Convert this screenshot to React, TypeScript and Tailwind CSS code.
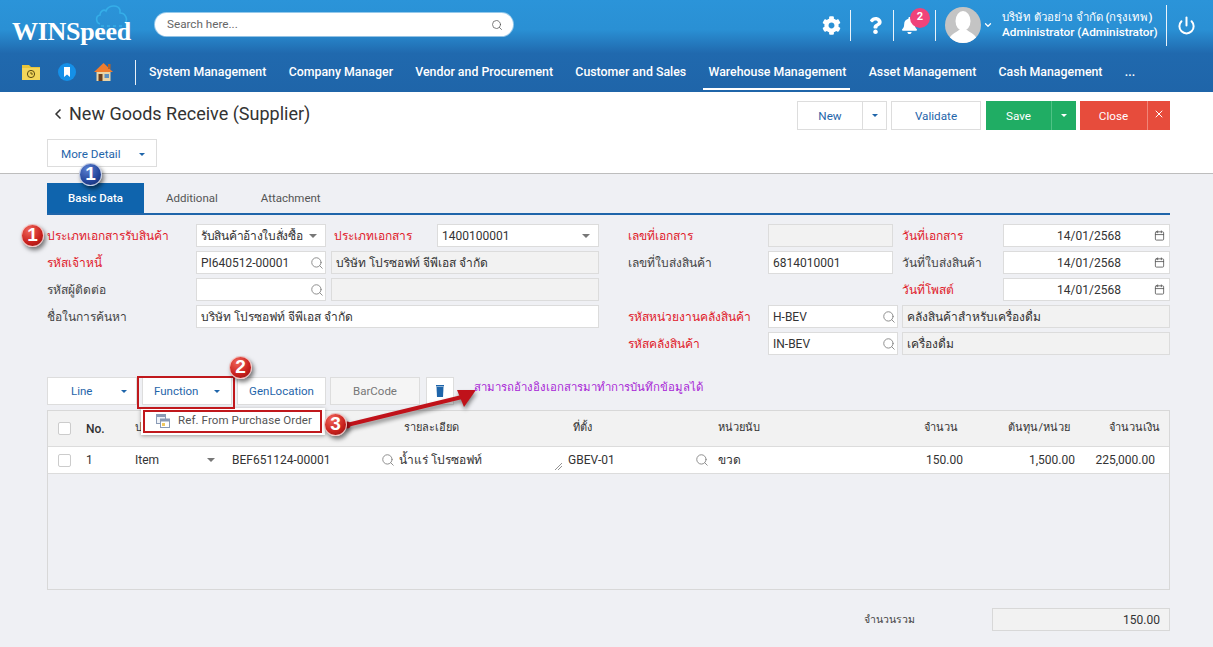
import React from "react";
import { Search, Calendar, Power, ChevronLeft, ChevronDown, X } from "lucide-react";
import { FaCog, FaQuestion, FaBell } from "react-icons/fa";

function Caret({ className = "border-t-[#1f65aa]" }: { className?: string }) {
  return <span className={`inline-block w-0 h-0 border-x-[3px] border-x-transparent border-t-[3px] ${className}`} />;
}

function GrayCaret() {
  return <span className="inline-block w-0 h-0 border-x-[4px] border-x-transparent border-t-[4px] border-t-[#777]" />;
}

function Label({ text, red, className = "" }: { text: string; red?: boolean; className?: string }) {
  return <div className={`text-xs shrink-0 ${red ? "text-[#e0202a]" : "text-[#444]"} ${className}`}>{text}</div>;
}

function Field({ value, className = "", search, ro, caret, date }: { value?: string; className?: string; search?: boolean; ro?: boolean; caret?: boolean; date?: boolean }) {
  return (
    <div className={`h-[23px] border border-[#dcdcdc] flex items-center px-1 text-xs text-[#333] ${ro ? "bg-[#f2f2f2]" : "bg-white"} ${className}`}>
      <span className={`flex-1 truncate ${date ? "text-center pl-[16px]" : ""}`}>{value}</span>
      {search && <Search size={14} strokeWidth={1.6} className="text-[#888] -mr-[3px] shrink-0" />}
      {caret && <span className="mr-1 flex shrink-0"><GrayCaret /></span>}
      {date && <Calendar size={11} strokeWidth={1.8} className="text-[#555] shrink-0" />}
    </div>
  );
}

function Row({ children }: { children: React.ReactNode }) {
  return <div className="flex items-center h-[23px]">{children}</div>;
}

function Nav({ text, active }: { text: string; active?: boolean }) {
  return (
    <div className="relative text-[12.35px] font-medium text-white whitespace-nowrap h-full flex items-center">
      {text}
      {active && <span className="absolute bottom-[2px] -left-[5px] -right-[4px] h-[2px] bg-white" />}
    </div>
  );
}

function Sep({ className = "h-[31px]" }: { className?: string }) {
  return <span className={`w-px bg-white/90 ${className}`} />;
}

function Badge({ n, className, tone }: { n: string; className: string; tone: "red" | "blue" }) {
  return (
    <div
      className={`absolute w-[23px] h-[23px] rounded-full flex items-center justify-center text-white font-bold text-[19px] border border-white/70 shadow-[2px_3px_4px_rgba(0,0,0,0.5)] font-[Liberation_Sans,sans-serif] ${
        tone === "red" ? "bg-[radial-gradient(circle_at_35%_25%,#f0655a,#c8201c_60%,#8f0f0f)]" : "bg-[radial-gradient(circle_at_35%_25%,#5a7fd0,#24459a_60%,#142a6a)]"
      } ${className}`}
    >
      {n}
    </div>
  );
}

function HCell({ children, className = "" }: { children?: React.ReactNode; className?: string }) {
  return <div className={`flex items-center text-[#333] ${className}`}>{children}</div>;
}

export default function App() {
  return (
    <div className="relative w-[1213px] h-[647px] overflow-hidden bg-[#eff0f4] font-[Roboto,sans-serif]">
      {/* Header */}
      <header className="h-[92px] bg-[linear-gradient(to_bottom,#2b94d9_0%,#2a90d4_32%,#2069ae_58%,#1f65a9_100%)]">
        <div className="h-[52px] flex items-center relative">
          <div className="relative w-[155px] h-full shrink-0">
            <svg className="absolute left-[95px] top-[3px]" width="34" height="24" viewBox="0 0 34 24" fill="none">
              <path d="M5 21C1 20 0 13 5 12C5 8 9 6 11 8C13 2 23 1 25 7C25 9 25 10 25 10C31 10 33 17 30 20" stroke="#35aee8" strokeWidth="1.6" />
              <path d="M6 23H30" stroke="#35aee8" strokeWidth="1.4" strokeDasharray="3 3" />
            </svg>
            <div className="absolute left-[12px] top-[17px] text-[26px] leading-[30px] font-bold text-white tracking-[-0.3px] font-[Liberation_Serif,serif]">WINSpeed</div>
          </div>
          <div className="w-[358px] h-[23px] bg-white rounded-full flex items-center pl-3 pr-2 -mt-[3px] shadow-[0_0_0_1px_rgba(255,255,255,0.5)]">
            <span className="flex-1 text-[11.7px] text-[#666]">Search here...</span>
            <Search size={12} strokeWidth={1.5} className="text-[#555] mr-[2px]" />
          </div>
          <div className="ml-auto flex items-center h-full -mt-[2px] text-white">
            <FaCog size={19} className="mr-[9px]" />
            <Sep />
            <FaQuestion size={17} className="ml-[16px] mr-[9px]" />
            <Sep />
            <span className="relative mx-[7px] w-[27px] flex items-center">
              <FaBell size={17} />
              <span className="absolute left-[9px] -top-[9px] w-5 h-5 rounded-full bg-[#f0437a] text-[11px] font-bold flex items-center justify-center">2</span>
            </span>
            <Sep />
            <div className="w-9 h-9 rounded-full bg-[#c4c4c4] overflow-hidden ml-[9px] shrink-0">
              <svg viewBox="0 0 36 36" width="36" height="36">
                <ellipse cx="18" cy="14" rx="7.5" ry="10" fill="#fff" />
                <path d="M3 36C4 27 11 26 14 23H22C25 26 32 27 33 36Z" fill="#fff" />
              </svg>
            </div>
            <ChevronDown size={10} strokeWidth={3} className="ml-[2px] mr-[9px]" />
            <div className="w-[158px] leading-[15px] font-medium whitespace-nowrap">
              <div className="text-[11.4px]">บริษัท ตัวอย่าง จำกัด (กรุงเทพ)</div>
              <div className="text-[11.8px]">Administrator (Administrator)</div>
            </div>
            <Sep className="h-[41px] ml-[6px]" />
            <Power size={19} strokeWidth={2.5} className="ml-[10px] mr-[17px]" />
          </div>
        </div>
        <nav className="h-10 flex items-center pl-[22px]">
          <svg width="18" height="16" viewBox="0 0 18 16" className="shrink-0">
            <path d="M0 1H7L9 3H18V16H0Z" fill="#e8c53a" />
            <rect y="4" width="18" height="12" fill="#f3d65a" />
            <circle cx="9" cy="10" r="3.6" fill="none" stroke="#5a4a10" strokeWidth="1" />
            <path d="M9 8V10H11" stroke="#5a4a10" strokeWidth="0.9" fill="none" />
          </svg>
          <svg width="18" height="18" viewBox="0 0 18 18" className="ml-[18px] shrink-0">
            <circle cx="9" cy="9" r="9" fill="#1590e8" />
            <path d="M6 4H12V14L9 11.5L6 14Z" fill="#fff" />
          </svg>
          <svg width="19" height="18" viewBox="0 0 19 18" className="ml-[18px] shrink-0">
            <path d="M9.5 0L19 9H0Z" fill="#ef7d2e" />
            <rect x="14" y="1" width="2.5" height="5" fill="#b5642a" />
            <rect x="2.5" y="9" width="14" height="9" fill="#e8d4a8" />
            <rect x="4.5" y="11" width="4" height="7" fill="#6a4020" />
            <rect x="10.5" y="11" width="4.5" height="4" fill="#5b8fc0" />
          </svg>
          <span className="ml-[22px] mr-[13px] w-px h-[25px] bg-white/90" />
          <div className="flex items-center gap-[22.3px] h-full">
            <Nav text="System Management" />
            <Nav text="Company Manager" />
            <Nav text="Vendor and Procurement" />
            <Nav text="Customer and Sales" />
            <Nav text="Warehouse Management" active />
            <Nav text="Asset Management" />
            <Nav text="Cash Management" />
            <Nav text="..." />
          </div>
        </nav>
      </header>

      {/* Title block */}
      <section className="h-[82px] bg-white border-b border-[#bdbdbd] pl-[47px] pr-[43px] relative">
        <div className="flex items-start justify-between pt-[9px]">
          <div className="flex items-center text-[18px] leading-[26px] text-[#333]">
            <ChevronLeft size={16} strokeWidth={2.5} className="ml-[3px] mr-[3px]" />
            New Goods Receive (Supplier)
          </div>
          <div className="flex items-center text-[11.7px]">
            <div className="flex h-[29px] border border-[#ddd] text-[#1f65aa]">
              <span className="w-[65px] pt-[2px] flex items-center justify-center border-r border-[#ddd]">New</span>
              <span className="w-[23px] flex items-center justify-center"><Caret /></span>
            </div>
            <div className="ml-[4px] w-[90px] h-[29px] pt-[2px] border border-[#ddd] text-[#1f65aa] flex items-center justify-center">Validate</div>
            <div className="ml-[5px] flex h-[29px] bg-[#20ad64] text-white">
              <span className="w-[66px] pt-[2px] flex items-center justify-center border-r border-[#4fc285]">Save</span>
              <span className="w-[24px] flex items-center justify-center"><Caret className="border-t-white" /></span>
            </div>
            <div className="ml-[4px] flex h-[29px] bg-[#e74c3c] text-white">
              <span className="w-[68px] pt-[2px] flex items-center justify-center border-r border-[#f08578]">Close</span>
              <span className="w-[22px] flex items-start pt-[7px] justify-center"><X size={12} strokeWidth={2} /></span>
            </div>
          </div>
        </div>
        <div className="mt-[9px] w-[110px] h-[28px] pt-[3px] border border-[#ddd] text-[11.7px] text-[#1f65aa] flex items-center pl-[13px] gap-[18px]">
          More Detail <Caret />
        </div>
      </section>

      {/* Tabs */}
      <div className="mr-[43px] ml-[47px] mt-[9px] flex h-[32px] border-b-2 border-[#1f65aa] text-[11.5px]">
        <div className="w-[97px] pt-px bg-[#0f64ad] text-white flex items-center justify-center font-medium">Basic Data</div>
        <div className="ml-[22px] pt-px text-[#555] flex items-center">Additional</div>
        <div className="ml-[43px] pt-px text-[#555] flex items-center">Attachment</div>
      </div>

      {/* Form */}
      <div className="ml-[47px] mr-[43px] mt-[9px] flex">
        <div className="w-[552px] flex flex-col gap-1">
          <Row>
            <Label text="ประเภทเอกสารรับสินค้า" red className="w-[149px]" />
            <Field value="รับสินค้าอ้างใบสั่งซื้อ" caret className="w-[130px] tracking-[-0.3px]" />
            <Label text="ประเภทเอกสาร" red className="w-[111px] pl-[8px]" />
            <Field value="1400100001" caret className="w-[162px]" />
          </Row>
          <Row>
            <Label text="รหัสเจ้าหนี้" red className="w-[149px]" />
            <Field value="PI640512-00001" search className="w-[130px]" />
            <Field value="บริษัท โปรซอฟท์ จีพีเอส จำกัด" ro className="ml-[5px] flex-1" />
          </Row>
          <Row>
            <Label text="รหัสผู้ติดต่อ" className="w-[149px]" />
            <Field search className="w-[130px]" />
            <Field ro className="ml-[5px] flex-1" />
          </Row>
          <Row>
            <Label text="ชื่อในการค้นหา" className="w-[149px]" />
            <Field value="บริษัท โปรซอฟท์ จีพีเอส จำกัด" className="flex-1" />
          </Row>
        </div>
        <div className="ml-[29px] flex-1 flex flex-col gap-1">
          <Row>
            <Label text="เลขที่เอกสาร" red className="w-[140px]" />
            <Field ro className="w-[125px]" />
            <Label text="วันที่เอกสาร" red className="w-[110px] pl-[9px]" />
            <Field value="14/01/2568" date className="flex-1" />
          </Row>
          <Row>
            <Label text="เลขที่ใบส่งสินค้า" className="w-[140px]" />
            <Field value="6814010001" className="w-[125px]" />
            <Label text="วันที่ใบส่งสินค้า" className="w-[110px] pl-[9px]" />
            <Field value="14/01/2568" date className="flex-1" />
          </Row>
          <Row>
            <span className="w-[265px]" />
            <Label text="วันที่โพสต์" red className="w-[110px] pl-[9px]" />
            <Field value="14/01/2568" date className="flex-1" />
          </Row>
          <Row>
            <Label text="รหัสหน่วยงานคลังสินค้า" red className="w-[140px]" />
            <Field value="H-BEV" search className="w-[130px]" />
            <Field value="คลังสินค้าสำหรับเครื่องดื่ม" ro className="ml-[4px] flex-1" />
          </Row>
          <Row>
            <Label text="รหัสคลังสินค้า" red className="w-[140px]" />
            <Field value="IN-BEV" search className="w-[130px]" />
            <Field value="เครื่องดื่ม" ro className="ml-[4px] flex-1" />
          </Row>
        </div>
      </div>

      {/* Toolbar */}
      <div className="ml-[47px] mt-[22px] flex h-[28px] text-[11.5px]">
        <div className="w-[90px] pt-px bg-white border border-[#ddd] text-[#1f65aa] flex items-center pl-[23px] gap-[29px]">Line <Caret /></div>
        <div className="ml-[5px] w-[90px] pt-px bg-white border border-[#ddd] text-[#1f65aa] flex items-center pl-[11px] gap-[16px]">Function <Caret /></div>
        <div className="ml-[5px] w-[89px] pt-px bg-white border border-[#ddd] text-[#1f65aa] flex items-center justify-center">GenLocation</div>
        <div className="ml-[4px] w-[90px] pt-px bg-[#f5f5f5] border border-[#ddd] text-[#777] flex items-center justify-center">BarCode</div>
        <div className="ml-[6px] w-[28px] bg-white border border-[#ddd] flex items-center justify-center">
          <svg width="8" height="12" viewBox="0 0 8 12">
            <rect x="0" y="0" width="8" height="1.5" fill="#1f65aa" />
            <path d="M0.5 2H7.5L7 12H1Z" fill="#1f65aa" />
          </svg>
        </div>
      </div>

      {/* Table */}
      <div className="ml-[47px] mt-[5px] w-[1123px] h-[180px] border border-[#d8d8d8]">
        <div className="h-[36px] bg-[#f2f2f2] border-b border-[#dcdcdc] text-[11px] grid grid-cols-[38px_49px_97px_172px_169px_145px_162px_78px_112px_1fr]">
          <HCell className="pl-[10px]"><span className="w-[13px] h-[13px] bg-white border border-[#ccc] rounded-[2px]" /></HCell>
          <HCell className="font-medium text-xs">No.</HCell>
          <HCell>ประเภท</HCell>
          <HCell />
          <HCell>รายละเอียด</HCell>
          <HCell>ที่ตั้ง</HCell>
          <HCell>หน่วยนับ</HCell>
          <HCell className="justify-end">จำนวน</HCell>
          <HCell className="justify-end">ต้นทุน/หน่วย</HCell>
          <HCell className="justify-end pr-[9px]">จำนวนเงิน</HCell>
        </div>
        <div className="h-[27px] bg-white border-b border-[#dcdcdc] text-xs grid grid-cols-[38px_49px_97px_149px_18px_169px_127px_23px_150px_95px_112px_1fr]">
          <HCell className="pl-[10px]"><span className="w-[13px] h-[13px] bg-white border border-[#ccc] rounded-[2px]" /></HCell>
          <HCell>1</HCell>
          <HCell className="justify-between pr-[17px]">Item <GrayCaret /></HCell>
          <HCell>BEF651124-00001</HCell>
          <HCell><Search size={14} strokeWidth={1.6} className="text-[#888]" /></HCell>
          <HCell className="relative">
            น้ำแร่ โปรซอฟท์
            <svg className="absolute right-[5px] bottom-[2px]" width="9" height="9" viewBox="0 0 9 9"><path d="M1 8L8 1M4 8L8 4" stroke="#777" strokeWidth="0.8" /></svg>
          </HCell>
          <HCell>GBEV-01</HCell>
          <HCell><Search size={14} strokeWidth={1.6} className="text-[#888]" /></HCell>
          <HCell>ขวด</HCell>
          <HCell className="justify-end">150.00</HCell>
          <HCell className="justify-end">1,500.00</HCell>
          <HCell className="justify-end pr-[14px]">225,000.00</HCell>
        </div>
      </div>

      {/* Totals */}
      <div className="ml-[864px] mt-[18px] flex items-center">
        <div className="w-[128px] text-[10.5px] text-[#444]">จำนวนรวม</div>
        <div className="w-[178px] h-[23px] bg-[#f2f2f2] border border-[#d8d8d8] text-xs text-[#333] flex items-center justify-end pr-[9px]">150.00</div>
      </div>

      {/* Dropdown menu */}
      <div className="absolute left-[141px] top-[408px] w-[184px] h-[27px] pb-[2px] bg-white shadow-[0_1px_4px_rgba(0,0,0,0.35)] flex items-center text-[11.5px] text-[#555] tracking-[0.1px] pl-[15px] whitespace-nowrap">
        <svg width="14" height="14" viewBox="0 0 14 14" className="mr-[8px] shrink-0">
          <rect x="0.5" y="0.5" width="9" height="9" fill="#eef2f8" stroke="#8a9ab5" />
          <rect x="0.5" y="0.5" width="9" height="2.5" fill="#8a9ab5" />
          <rect x="4.5" y="5" width="9" height="8.5" fill="#fff" stroke="#8a9ab5" />
          <rect x="4.5" y="5" width="9" height="2.5" fill="#8a9ab5" />
          <rect x="6" y="9" width="3" height="3" fill="#f0c860" />
        </svg>
        Ref. From Purchase Order
      </div>

      {/* Annotations */}
      <div className="absolute left-[137px] top-[376px] w-[98px] h-[33px] border-2 border-[#c0181c]" />
      <div className="absolute left-[143px] top-[410px] w-[179px] h-[23px] border-2 border-[#c0181c]" />
      <svg className="absolute left-[340px] top-[380px] drop-shadow-[1px_3px_2px_rgba(0,0,0,0.45)]" width="140" height="55" viewBox="0 0 140 55" fill="none">
        <path d="M7 45L122 17" stroke="#c0121a" strokeWidth="4" />
        <circle cx="7" cy="45" r="3.5" fill="#c0121a" />
        <path d="M136 10L117 10L124 27Z" fill="#c0121a" />
      </svg>
      <div className="absolute left-[474px] top-[378px] text-[11.4px] leading-[18px] text-[#a81fd6] whitespace-nowrap">สามารถอ้างอิงเอกสารมาทำการบันทึกข้อมูลได้</div>
      <Badge n="1" tone="blue" className="left-[79px] top-[163px]" />
      <Badge n="1" tone="red" className="left-[21px] top-[224px]" />
      <Badge n="2" tone="red" className="left-[229px] top-[356px]" />
      <Badge n="3" tone="red" className="left-[324px] top-[413px]" />
    </div>
  );
}
